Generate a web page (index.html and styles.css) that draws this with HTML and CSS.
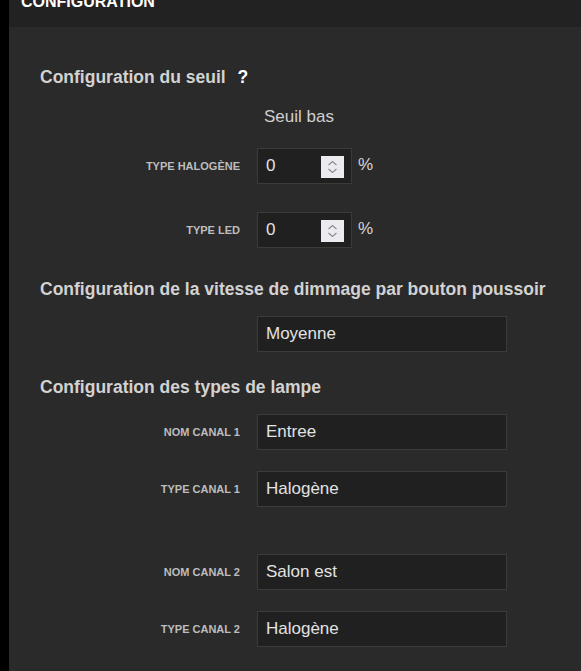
FILE: index.html
```html
<!DOCTYPE html>
<html lang="fr">
<head>
<meta charset="utf-8">
<title>Configuration</title>
<link rel="stylesheet" href="styles.css">
</head>
<body>
<div class="panel">
  <div class="panel-head"><span class="panel-title">CONFIGURATION</span></div>
  <div class="panel-body">
    <h3 class="section-title">Configuration du seuil <span class="help">?</span></h3>
    <div class="field field-head">
      <span></span>
      <span class="col-head">Seuil bas</span>
    </div>
    <div class="field field-first">
      <label class="label">TYPE HALOGÈNE</label>
      <div class="num-wrap">
        <div class="num">
          <input class="num-input" type="text" value="0" readonly>
          <span class="spin"><svg width="23" height="22" viewBox="0 0 23 22"><path d="M7.5 9 L11.5 5.5 L15.5 9" fill="none" stroke="#8e8e94" stroke-width="1.2"/><path d="M7.5 13 L11.5 16.5 L15.5 13" fill="none" stroke="#8e8e94" stroke-width="1.2"/></svg></span>
        </div>
        <span class="unit">%</span>
      </div>
    </div>
    <div class="field field-num2">
      <label class="label">TYPE LED</label>
      <div class="num-wrap">
        <div class="num">
          <input class="num-input" type="text" value="0" readonly>
          <span class="spin"><svg width="23" height="22" viewBox="0 0 23 22"><path d="M7.5 9 L11.5 5.5 L15.5 9" fill="none" stroke="#8e8e94" stroke-width="1.2"/><path d="M7.5 13 L11.5 16.5 L15.5 13" fill="none" stroke="#8e8e94" stroke-width="1.2"/></svg></span>
        </div>
        <span class="unit">%</span>
      </div>
    </div>

    <h3 class="section-title title-2">Configuration de la vitesse de dimmage par bouton poussoir</h3>
    <div class="field field-first-s">
      <span></span>
      <input class="text-input" type="text" value="Moyenne" readonly>
    </div>

    <h3 class="section-title title-3">Configuration des types de lampe</h3>
    <div class="field field-first-s">
      <label class="label">NOM CANAL 1</label>
      <input class="text-input" type="text" value="Entree" readonly>
    </div>
    <div class="field field-next">
      <label class="label">TYPE CANAL 1</label>
      <input class="text-input" type="text" value="Halogène" readonly>
    </div>
    <div class="field field-group">
      <label class="label">NOM CANAL 2</label>
      <input class="text-input" type="text" value="Salon est" readonly>
    </div>
    <div class="field field-next">
      <label class="label">TYPE CANAL 2</label>
      <input class="text-input" type="text" value="Halogène" readonly>
    </div>
  </div>
</div>
</body>
</html>
```

FILE: styles.css
```css
html, body {
  margin: 0;
  padding: 0;
  background: #000;
  height: 100%;
  overflow: hidden;
}

body {
  font-family: "Liberation Sans", Arial, sans-serif;
  color: #cfcfcf;
}

.panel {
  margin-left: 9px;
  background: #2a2a2a;
  min-height: 100%;
}

.panel-head {
  height: 27px;
  background: #222222;
  padding-left: 12px;
  overflow: hidden;
}

.panel-title {
  display: block;
  font-size: 16px;
  line-height: 16px;
  font-weight: bold;
  color: #ffffff;
  margin-top: -6px;
}

.panel-body {
  padding: 40px 0 0 31px;
}

.section-title {
  margin: 0;
  font-size: 17.5px;
  line-height: 20px;
  font-weight: bold;
  color: #d2d2d2;
}

.help {
  color: #ffffff;
  margin-left: 7px;
}

.title-2 {
  margin-top: 31px;
}

.title-3 {
  margin-top: 25px;
}

.field {
  display: grid;
  grid-template-columns: 200px auto;
  column-gap: 17px;
  align-items: center;
  justify-content: start;
}

.field-head {
  margin-top: 20px;
}

.col-head {
  font-size: 17px;
  line-height: 20px;
  padding-left: 7px;
  color: #cfcfcf;
}

.field-first {
  margin-top: 21px;
}

.field-num2 {
  margin-top: 28px;
}

.field-first-s {
  margin-top: 17px;
}

.field-next {
  margin-top: 21px;
}

.field-group {
  margin-top: 47px;
}

.label {
  text-align: right;
  font-size: 11px;
  font-weight: bold;
  color: #bdbdbd;
}

.num-wrap {
  display: flex;
  align-items: center;
  gap: 6px;
}

.num {
  box-sizing: border-box;
  width: 95px;
  height: 36px;
  background: #202020;
  border: 1px solid #3b3b3b;
  display: flex;
  align-items: center;
  padding: 0 7px 0 8px;
}

.num-input {
  flex: 1;
  min-width: 0;
  border: 0;
  outline: none;
  background: transparent;
  color: #e2e2e2;
  font-family: "Liberation Sans", Arial, sans-serif;
  font-size: 17px;
  padding: 0;
  margin: 0;
}

.spin {
  display: block;
  width: 23px;
  height: 22px;
  background: #ebebef;
  margin-top: 2px;
}

.spin svg {
  display: block;
}

.unit {
  font-size: 17px;
  color: #d6d6d6;
  margin-top: -3px;
}

.text-input {
  box-sizing: border-box;
  width: 250px;
  height: 36px;
  background: #202020;
  border: 1px solid #3b3b3b;
  color: #e2e2e2;
  font-family: "Liberation Sans", Arial, sans-serif;
  font-size: 17px;
  padding: 0 8px;
  margin: 0;
  outline: none;
}
```
